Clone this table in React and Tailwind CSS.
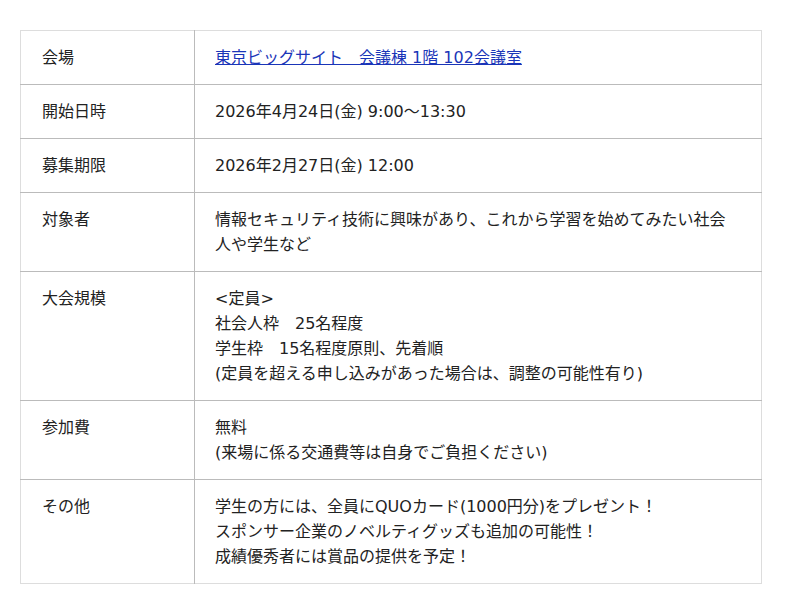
import React from 'react';

// 開催概要
const rows = [
  { label: '会場', link: '東京ビッグサイト　会議棟 1階 102会議室' },
  { label: '開始日時', lines: ['2026年4月24日(金) 9:00〜13:30'] },
  { label: '募集期限', lines: ['2026年2月27日(金) 12:00'] },
  { label: '対象者', lines: ['情報セキュリティ技術に興味があり、これから学習を始めてみたい社会人や学生など'] },
  {
    label: '大会規模',
    lines: [
      '<定員>',
      '社会人枠　25名程度',
      '学生枠　15名程度原則、先着順',
      '(定員を超える申し込みがあった場合は、調整の可能性有り)'
    ]
  },
  { label: '参加費', lines: ['無料', '(来場に係る交通費等は自身でご負担ください)'] },
  {
    label: 'その他',
    lines: [
      '学生の方には、全員にQUOカード(1000円分)をプレゼント！',
      'スポンサー企業のノベルティグッズも追加の可能性！',
      '成績優秀者には賞品の提供を予定！'
    ]
  }
];

export default function App() {
  return (
    <div
      className="bg-white min-h-[614px] pt-[30px] pl-[20px] text-[#222] text-[16px] leading-[25px]"
      style={{ fontFamily: '"DejaVu Sans", "Noto Sans CJK JP", sans-serif' }}
    >
      <table className="w-[742px] border-collapse border border-[#dddddd]">
        <tbody>
          {rows.map((row) => (
            <tr key={row.label} className="border-b border-[#bbbbbb] last:border-b-[#dddddd]">
              <th className="w-[174px] border-r border-[#bbbbbb] pl-[21px] pr-[16px] py-[14px] text-left align-top font-normal">
                {row.label}
              </th>
              <td className="pl-[20px] pr-[24px] py-[14px] align-top">
                {row.link ? (
                  <a href="#" className="text-[#1a35b8] underline">{row.link}</a>
                ) : (
                  row.lines.map((line, i) => <div key={i}>{line}</div>)
                )}
              </td>
            </tr>
          ))}
        </tbody>
      </table>
    </div>
  );
}
